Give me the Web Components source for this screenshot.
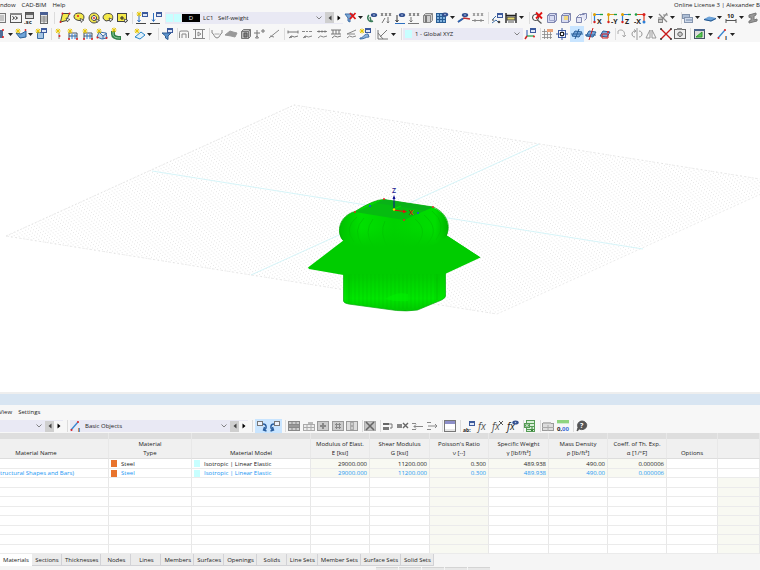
<!DOCTYPE html>
<html lang="en">
<head>
<meta charset="utf-8">
<title>Structural model</title>
<style>
html,body{margin:0;height:100%;background:#fff}
body{font:6px/8px "Open Sans","Noto Sans",sans-serif;color:#222;overflow:hidden}
</style>
</head>
<body>
<model-app></model-app>
<script>
const p=(d,s='#777',f='none',w=1)=>`<path d="${d}" stroke="${s}" fill="${f}" stroke-width="${w}"/>`;
const box=(x,y,w,h,f,s='none')=>`<rect x="${x}" y="${y}" width="${w}" height="${h}" fill="${f}" stroke="${s}"/>`;
const dot=(x,y,c='#e02020',r=1)=>`<circle cx="${x}" cy="${y}" r="${r}" fill="${c}"/>`;
const lbl=(x,y,t,c='#222',s=6)=>`<text x="${x}" y="${y}" fill="${c}" font-size="${s}" font-weight="700">${t}</text>`;
const fxl=c=>`<text x="0" y="9.500" fill="${c}" font-size="10" font-style="italic">fx</text>`;
const win=(x,y)=>box(x+.5,y+.5,5,4,'#dfe8f8','#3c5a9c')+box(x,y,6,2,'#3c5a9c');
const star=(x,y)=>p(`M${x-2.5} ${y}h5M${x} ${y-2.5}v5M${x-2} ${y-2}l4 4M${x+2} ${y-2}l-4 4`,'#e6c400','none',.9);
const eye=(x,y)=>`<ellipse cx="${x}" cy="${y}" rx="3.2" ry="2" fill="#33508f"/>`+dot(x,y,'#b9c8ec',.8);
const cur=(x,y)=>p(`M${x} ${y}l4 1.5-1.7.8-.9 1.7z`,'#333','#fff',.7);
const YL='#f4e94a';
const cube=(f,s)=>p('M1.5 3.5l2-2h7v7l-2 2h-7zM1.5 3.5h7v7M8.5 3.5l2-2',s,f);
const axes=(a,t)=>p('M2.500 10V2.500H10',a,'none',1.2)+p('M8 2.500h3','#18a040','none',1.3)+dot(2.500,2.500,'#e0a000',1.5)+dot(2.500,10,'#d82020',1.2)+lbl(5,11.500,t,'#222',7);
const beam=(c='#777')=>p('M1 4h10M1 2.500v3M11 2.500v3M2 10l2.500-2 3 1L11 8',c)+dot(4,9,c);
const ICON={
page:box(2.5,1.5,7,9,'#eee','#777')+p('M4 4h4M4 6h4M4 8h4','#999'),
console:box(.5,1.5,11,9,'#f4f4f4','#555')+box(0,1,12,2,'#888')+p('M2.500 4.500l2 1.500-2 1.500M5.500 4.500l2 1.500-2 1.500','#222'),
calc:box(1.5,.5,8,6,'#ddd','#555')+box(2,1,7,2,'#666')+lbl(0,11.5,'.sc','#222',6),
sheet:box(2.500,.5,7,11,'#e6e6e6','#666')+box(2,0,8,3,'#4a5f94')+p('M3 5h6M3 7h6M3 9h6M6 4v7','#888'),
selPoly:p('M3.500 1.500h7l-3 7-6 1.500z','#444',YL)+dot(3.5,1.5)+dot(10.5,1.5)+dot(1.5,10)+cur(7,6),
selCirc:p('M1 4.500C1 2 3.500 1 6 1s5 1.500 5 4-2 4-5 3.500S1 7 1 4.500z','#444',YL)+dot(5,4)+cur(7,6.5),
selRing:p('M6 1a5 5 0 1 0 .1 0z','#444',YL)+p('M6 3.500a2.500 2.500 0 1 0 .1 0z','#444','#f6f6f6')+dot(6,6)+cur(7.5,7),
selLasso:p('M1.500 7C0 4 3 1 7 1.500s4 3 3.500 6L4 9z','#444',YL)+cur(7,6),
selBox:box(1.5,1.5,9,8,YL,'#444')+p('M4 6h4M6 4v4','#222')+cur(8,7),
newLc:win(6,0)+p('M3 3v6M1.500 8L3 10l1.500-2','#2c6fc0')+star(3,2)+p('M0 11.500h10','#444'),
loadLc:win(6,0)+p('M3.500 1v8M2 7.500l1.500 2 1.500-2','#2c6fc0')+p('M0 11.500h10','#444'),
filterX:p('M1 2h8L6 6v4l-2-1V6z','#3f6fa8','#7ba6d4')+p('M6 1l5.500 6M11.500 1L6 7','#e01414','none',1.8),
eyeC:p('M3 3c-3 3 0 8 4 6M4 5l1 4','#3b7d5a','none',1.4)+eye(8,3),
nums:p('M1 1l2 3M3 1L1 4M5 1l2 3M7 1L5 4M9 1l2 3M11 1L9 4','#555','none',.8)+p('M2 11l3-5M8 5v6M7 9.500l1 1.500 1-1.500','#777'),
eyeAx:p('M3 3v6M1.500 8L3 10l1.500-2','#333')+p('M1 11.500h10','#2c6fc0')+eye(8,3),
numAx:p('M1 1l2 3M3 1L1 4M5 1l2 3M7 1L5 4M9 1l2 3M11 1L9 4','#555','none',.8)+p('M3 5v5M1.500 8.500L3 10l1.500-1.500M0 11.500h11','#777'),
solid:cube('#cfcfcf','#888')+p('M4 3.500v7','#777','none',2),
mesh:box(.5,1.5,9,9,'#7fb0dc','#285c94')+p('M3.500 2v9M6.500 2v9M1 4.500h9M1 7.500h9','#285c94')+eye(9,2.5),
lineEye:p('M0 10l6-4 6 1','#c03030','none',1.3)+p('M0 10l5-3.500','#2a65b0','none',2)+eye(7,3),
numLine:p('M1 1l2 3M3 1L1 4M5 1l2 3M7 1L5 4M9 1l2 3M11 1L9 4','#777','none',.8)+p('M0 8.500h12M3 7v3M9 7v3','#888'),
dimWin:win(6,1)+p('M1 11l4-3 2 2M1 8l4-4','#3f6fa8')+dot(2,8,'#777')+dot(8,10,'#444',1.3),
scale:p('M1 1v10M11 1v10M1 3.500h10','#222','none',1.4)+box(2,5,8,3,'#e6d86a','#444')+p('M3 10h6','#555'),
findX:p('M4.500 2.500a3 3 0 1 0 .1 0zM6.500 8l4 3.500','#555','#fff',1.2)+p('M5 .5l6 6M11 .5L5 6.500','#e01414','none',1.8),
cube:cube('#d8dcf2','#8087b0')+p('M3.500 1.500v7h7','#a0a6cc'),
cubeY:cube('#d8dcf2','#8087b0')+box(4,4,4,4,'#f1d982'),
cubes:p('M1.500 5.500h5v5h-5zM5.500 3.500l2-2h4v5l-2 2','#8087b0','#e4e6f6')+p('M1.500 5.500l3-3h5','#8087b0'),
axX:axes('#2a7fd8','X'),axY:axes('#d89c20','-Y'),axZ:axes('#2a7fd8','Z'),
axNX:p('M10 10V2.500H1','#e04020','none',1.2)+dot(10,2.5,'#d82020',1.5)+dot(10,10,'#2a7fd8',1.5)+dot(2,2.5,'#18a040',1.3)+lbl(0,11.5,'-X','#222',7),
grayStar:p('M2 2l8 8M10 1L4 9M1 6h5M6 3h5','#888','none',1.2)+box(1.5,7.5,4,3,'#ccc','#888'),
stack:box(.5,2.5,7,4,'#aebfd6','#8494ad')+box(2.5,5.5,8,5,'#d0daea','#8494ad')+p('M4 8h6','#6f86a8'),
plane:p('M0 7.500l5-2.500 7 1.500L7 9z','#6a9fd4','#6aa4dc')+p('M0 7.500L7 9l5-2.500','#24568c'),
dim10:lbl(2,5.5,'10','#222',6)+p('M1 8.500h10M1 7v4M11 7v4','#555'),
ibeam:p('M2 3l7-2v2L7 4v4l3-1v2l-8 2V9l2-.5V5L2 5.500z','#777','#999'),
nodeDrop:box(0,2,8,8,'#506d98')+dot(8,2)+dot(8,9)+box(2,4,3,3,'#c8d8ee'),
newSurf:p('M1 5l4 5 6-1V3L6 6z','#2b5f96','#6fa4d8')+star(3,3)+dot(10.5,2,'#e02020',.9),
newSolid:p('M2.500 4.500h6v6h-6z','#3d6da0','#a3c3e4')+win(6,0)+star(3,3),
newNode:star(5,3)+p('M6 5v6','#888')+dot(6.5,8),
newFrame:p('M2 11V5h8v6M2 8h8','#456','none')+star(3,3)+dot(2,11)+dot(10,11)+p('M5 11V6M8 11V6','#2a7fd8'),
newFrame3:p('M1 9l2-5 7 1 1 5-5 1zM3 4l4 4 4-3M7 8v3','#3f6fa8','#c8d8ea')+star(3,3)+dot(1.5,9.5)+dot(10.5,10),
newPipe:p('M2 3v3c0 3 3 4 8 4','#2f8048','none',4)+p('M2 4v2c0 3 3 4 7 4','#8fd0a0')+star(3,2),
newOpen:p('M1 9l6-5 4 3-5 4z','#2a85c8','#dff0fb')+star(3,3),
funnel:p('M1 5h9L7 8v3.500L4.500 10V8z','#2f5d93','#5f94cc')+win(6,0),
gate:p('M1.500 10V4.500Q1.500 3 3 3h6q1.500 0 1.500 1.500V10M4 10V6h4v4','#888'),
gateR:p('M0 1.500h12M0 10.500h12M2.500 1v10M9.500 1v10M5 4l3 2-3 2z','#888'),
curve:p('M1 2v3c2 0 2 5 5 5s3-5 5-5V2','#888')+p('M3.500 6h5','#aaa'),
surf:p('M0 7l5-4 3 1 4 1-2 4-4-1z','#999','#999'),
solidG:cube('#bbb','#777')+p('M4 5h3v4H4z','#555','#888'),
supp:p('M3 2v6M0 5h6M1.500 10L3 8l1.500 2zM7 3h4M9 1v4','#777'),
slope:p('M1 10L11 2M2 8l4 1','#888'),
beamA:beam(),beamB:p('M1 3.500h3M5 3.500h2M8 3.500h3M2 10l2.500-2 3 1L11 8','#888')+dot(4,9,'#777'),
beamC:p('M1 3.500h10M2 10l2.500-2 3 1L11 8','#888')+dot(3,3.5,'#777')+dot(6,3.5,'#777')+dot(9,3.5,'#777'),
beamD:p('M1 2h10M3 2v4M6 2v4M9 2v4M2 10l2.500-2 3 1L11 8M1 6h10','#777'),
beamE:p('M2 6l9-4M2 6h8M2 10l2.500-2 3 1L11 8','#888'),
newRes:win(6,0)+star(3,3)+p('M1 10c4 0 3-4 8-4l1 3c-4 0-4 2-9 2z','#3f6fa8','#8fb4dc'),
angle:p('M1 2v9h10M3 9l7-7M1 5l5 6','#777'),
csAx:p('M3 2v6','#2050b0')+p('M3 8h7','#18a040','none',1.2)+p('M3 8l-2 3','#d02020','none',1.5)+win(6,0)+dot(10,8.5),
gridPts:p('M0 3.500h10M0 6.500h10M0 9.500h10M2.500 1v10M5.500 1v10M8.500 1v10','#888','none',.8)+box(5,1,6,3,'#e9a27b'),
snap:box(2.5,2.5,7,7,'#f1f3fb','#3c5aa0')+p('M6 0v12M0 6h12','#3c5aa0')+box(4.5,4.5,3,3,'#fff','#222'),
wp:p('M1 8l3-5 7 1-3 5z','#2a5f98','#78a8dc')+p('M0 6h12M4 11l4-10','#2a5f98'),
wpR:p('M1 8l3-5 7 1-3 5z','#2a5f98','#78a8dc')+p('M8 0L4 12','#d02020')+p('M0 7h11','#2a5f98'),
wpB:p('M1 8l3-5 7 1-3 5z','#2a5f98','#78a8dc')+p('M3 6h6v4H3z','#d02020')+dot(9,4),
rot:p('M2 3c4-3 8 1 6 5M6.500 7L8 9l2-2M2 3v3','#aaa'),
mirror:p('M6 0v12M4 3C0 3 0 9 4 9M8 3c4 0 4 6 0 6','#999')+p('M3 1.500L5 3 3 4.500','#999'),
flip:p('M5 2v8H1zM7 2v8h4z','#999'),
cross:p('M1 1l10 10M11 1L1 11','#c81818','none',1.4)+dot(1,1,'#333')+dot(11,1,'#333')+dot(1,11,'#333')+dot(11,11,'#333'),
cam:box(.5,1.5,11,9,'#eee','#666')+p('M6 4a2.200 2.200 0 1 0 .1 0z','#555','#ccc')+box(3,0,5,2,'#888'),
greenBox:box(.5,1.5,10,9,'#ddd','#456')+box(0,1,11,2,'#4a648c')+p('M2 9l6-5v5z','#2d9b2d','#58c858'),
lineI:p('M1 10l7-8','#3a86d0','none',1.3)+dot(1.5,10)+dot(8,2)+lbl(8,11.5,'I','#222',6),
undoW:box(1.5,1.5,5,4,'#eef3fb','#777')+p('M7 4c4 0 4 5 1 6M8.500 7l-1 3 3 1','#2a5fa0','none',1.4),
redoW:box(5.5,1.5,5,4,'#eef3fb','#777')+p('M5 4C1 4 1 9 4 10M3.500 7l1 3-3 1','#2a5fa0','none',1.4),
rows:box(.5,1.500,11,9,'#ccc','#888')+p('M0 4.500h12M0 7.500h12M4 2v9M8 2v9','#888')+box(1,5,10,2,'#999'),
rowAdd:box(.5,4.5,11,6,'#eee','#aaa')+p('M0 7.500h12M4 5v6M8 5v6','#aaa')+p('M5 3h5','#bbb','none',2),
boxPlus:box(.5,1.5,11,9,'#ccc','#999')+p('M6 3v6M3 6h6','#888','none',2),
boxHash:box(.5,1.5,11,9,'#ccc','#999')+p('M4.500 3v6M7.500 3v6M3 4.500h6M3 7.500h6','#888'),
boxDots:box(.5,1.5,11,9,'#ddd','#999')+box(4,2,4,8,'#aaa')+p('M6 3v2M6 7v2','#eee'),
boxX:box(.5,1.5,11,9,'#c4c4c4','#aaa')+p('M2 2l8 8M10 2l-8 8','#666','none',1.6),
rowRet:box(1,3,6,2,'#666')+box(1,7,6,3,'#777')+p('M7 4h3v4H8','#777'),
rowX:box(0,4,5,4,'#888')+p('M6 3l5 5M11 3L6 8','#666','none',1.4),
rowL:p('M1 3.500h4M1 9.500h4M3 6.500h9M5 4.500l-2 2 2 2','#888'),
rowR:p('M1 2.500h4M1 9.500h4M2 6h9M9 4l2 2-2 2','#888'),
pane:box(.5,.5,11,11,'#fff','#777')+box(1,1,10,3,'#8d8fc9')+box(1,9,10,2,'#e6e6e6'),
abcW:win(6,1)+lbl(0,11.500,'ab:','#222',5),
fx:fxl('#555'),
fxX:fxl('#555')+p('M7 1l4 4M11 1L7 5','#555'),
fxE:fxl('#222')+eye(8.5,2.5),
xl:box(2.500,.5,8,11,'#d8efd8','#559b55')+p('M3 3.500h7M3 6.500h7M3 9.500h7','#559b55')+box(0,3,6,5,'#559b55')+p('M1.500 4l3 3M4.500 4l-3 3','#fff','none',.8)+p('M8 7v4M6.500 9.500L8 11l1.500-1.500','#338033'),
tblDel:box(.5,3.500,11,7,'#ddd','#999')+box(1,2,8,2,'#bbb')+p('M0 7.500h12M6 5v6','#aaa'),
dec:box(0,0,12,3,'#8fd47f')+box(0,3,12,1,'#cfead0')+lbl(0,11,'0,','#222',6)+lbl(5,11,'00','#3f6fd8',6),
help:p('M6 1a4.800 4.300 0 1 1-2.500 8L1 11l1-3.500A4.500 4.500 0 0 1 6 1z','#555','#555')+lbl(4,8,'?','#fff',7)
};

const define=(tag,css,body)=>customElements.define(tag,class extends HTMLElement{
  connectedCallback(){
    if(this.shadowRoot)return;
    const t=document.createElement('template');
    t.innerHTML=`<style>*{box-sizing:border-box}button,select{font:inherit;color:inherit;border:0;background:none;padding:0;margin:0}${css}</style>`+(typeof body==='function'?body(this):body);
    this.attachShadow({mode:'open'}).append(t.content.cloneNode(true));
  }
});

define('tool-button',`:host{display:block;flex:none;width:12px;height:14px}
:host([name=drop]){width:8px;margin-left:-2px}
:host([on]){background:#c9e5ff;box-shadow:0 0 0 1px #c9e5ff}
button{display:flex;width:100%;height:100%;align-items:center;justify-content:center}
svg{display:block;flex:none;overflow:visible;font-family:"Open Sans",sans-serif}`,
h=>{const n=h.getAttribute('name');return `<button aria-label="${n}">`+(n==='drop'?'<svg width="5" height="3" viewBox="0 0 5 3"><path d="M0 0h5L2.500 3z" fill="#222"/></svg>':`<svg width="12" height="12" viewBox="0 0 12 12">${ICON[n]}</svg>`)+'</button>'});

define('tool-group',`:host{display:flex;flex:none;align-items:center;justify-content:space-between;width:var(--w)}`,'<slot></slot>');
define('tool-separator',`:host{display:block;flex:none;width:1px;height:12px;margin:0 4px;background:#dcdcdc}`,'');
define('tool-row',`:host{display:flex;align-items:center;height:16px;overflow:hidden;background:#f7f7f7}`,'<slot></slot>');

define('pick-list',`:host{display:flex;flex:none;align-items:center;height:12px;width:var(--w);background:#e9e9f4}
select{appearance:none;flex:1;min-width:0;height:12px;padding:0 3px;font-size:6px;line-height:8px}
svg{flex:none;width:6px;height:4px;margin:0 3px;pointer-events:none}
button{flex:none;width:9px;height:11px;display:flex;align-items:center;justify-content:center}
button svg{width:4px;height:6px;margin:0}.prev{background:#cfcfcf}.next{background:#f7f7f7}`,
h=>`<slot></slot><select aria-label="${h.getAttribute('label')}"><option>${h.getAttribute('value')}</option></select><svg viewBox="0 0 6 4"><path d="M.5.5L3 3 5.500.5" fill="none" stroke="#666" stroke-width=".8"/></svg>`+(h.hasAttribute('steps')?'<button class="prev" aria-label="Previous"><svg viewBox="0 0 4 6"><path d="M3.500.5v5L.5 3z" fill="#444"/></svg></button><button class="next" aria-label="Next"><svg viewBox="0 0 4 6"><path d="M.5.5v5L3.500 3z" fill="#000"/></svg></button>':''));

define('color-chip',`:host{display:flex;flex:none;align-items:center;justify-content:center;width:var(--s,7px);height:8px;margin-left:1px;background:var(--c,#c8ffff);color:#fff}`,'<slot></slot>');

define('menu-bar',`:host{display:flex;height:var(--h,9px);align-items:center;justify-content:space-between;background:#f7f7f7;white-space:nowrap;overflow:hidden}
nav{display:flex;gap:6px;margin-left:var(--shift,0px)}`,
h=>`<nav>${h.getAttribute('items').split(',').map(i=>`<button>${i}</button>`).join('')}</nav><slot></slot>`);

define('model-view',`:host{display:block;flex:1;min-height:0;background:#fff}svg{display:block;width:100%;height:100%}`,()=>{
  const N=100,A=[6,236],V=[288/N,-131/N];let g='',ribs='';
  for(let i=0;i<=N;i++){const x=A[0]+V[0]*i,y=A[1]+V[1]*i;g+=`M${x.toFixed(2)} ${y.toFixed(2)}l491 78`}
  for(let x=347;x<443;x+=4)ribs+=`M${x} 274V${x<400?303+(x-347)/8:(x<420?309:309-(x-420)/2)}`;
  return `<svg viewBox="0 42 760 350" preserveAspectRatio="xMidYMid slice" role="img" aria-label="Model">
  <defs><linearGradient id="b"><stop offset="0" stop-color="#00c000"/><stop offset=".2" stop-color="#00e000"/><stop offset=".5" stop-color="#00d200"/><stop offset=".88" stop-color="#00de00"/><stop offset="1" stop-color="#00b400"/></linearGradient>
  <linearGradient id="v" x2="0" y2="1"><stop offset="0" stop-color="#00cc00"/><stop offset=".25" stop-color="#00cc00"/><stop offset=".75" stop-color="#00e600"/><stop offset="1" stop-color="#00c800"/></linearGradient>
  <linearGradient id="f" x2="0" y2="1"><stop offset="0" stop-color="#00cc00" stop-opacity="0"/><stop offset=".55" stop-color="#00cc00"/><stop offset="1" stop-color="#00cc00"/></linearGradient>
  <linearGradient id="h" x2="0" y2="1"><stop offset="0" stop-color="#00cc00"/><stop offset="1" stop-color="#00cc00" stop-opacity="0"/></linearGradient></defs>
  <path d="${g}" fill="none" stroke="#d2d2d2" stroke-width=".7" stroke-dasharray=".8 4.170"/>
  <path d="M6 236L294 105 785 183 497 314z" fill="none" stroke="#ddd" stroke-width=".6" stroke-dasharray="2 2"/>
  <path d="M152 171l491 78M251 275l288-131" stroke="#cdf3f7" stroke-width=".8"/>
  <path d="M343.500 266V301q0 2 5 3l48 6.500q10 1 21-.5l24-10q4-2 4-4V262z" fill="url(#v)" stroke="#06aa0c" stroke-width=".7"/>
  <path d="${ribs}" stroke="#00b400" stroke-width=".7" opacity=".4"/>
  <path d="M349 274v29M437 274v26" stroke="#00a800" stroke-width=".7" opacity=".7"/>
  <path d="M385 299q12-8 23-5v7q-12 1-23-2z" fill="#00ee00" opacity=".6"/>
  <path d="M344 240L308 267.500 309 269 343.500 275 480.500 257.500 446 235z" fill="#00cc00"/><path d="M446 235l34.500 22.500L445 274V262z" fill="#00cc00"/>
  <path d="M344 262h101v12l-16 8h-85z" fill="url(#h)"/>
  <path d="M384 199.500q-10 0-29 12c-16 5-19 21-12 29q22 12 52 12t51-15c5-10 2-24-13-30z" fill="url(#b)"/>
  <path d="M357 217q-14 11-3 25M364 218q-12 12-2 27M373 219q-10 13 0 27M385 221q-6 12 3 27M415 219q15 12 0 28M424 215q17 14 3 29M432 211q16 13 4 29" fill="none" stroke="#00be00" stroke-width=".6"/>
  <path d="M341 228h107l-2 12-1 22H344l-1-22z" fill="url(#f)"/>
  <path d="M343 240c-7-8-4-24 12-28.500q19-12 29-12l49 7.500c15 6 18 20 13 29" fill="none" stroke="#08a808" stroke-width=".8"/>
  <path d="M384 199.500l49 7.500-29 13-49-8z" fill="#06bc10"/><path d="M384 199.500l49 7.500-8 3.500-49-7.500z" fill="#0cac1c" opacity=".7"/>
  <path d="M394 209v-12" stroke="#101090"/><path d="M392.500 199l1.500-4 1.500 4z" fill="#101090"/>
  <path d="M394 210l10 1.500" stroke="#e01010"/><path d="M403 209.500l4 2.200-4 1.500z" fill="#e01010"/><path d="M394 209l7-3" stroke="#00e000"/>
  ${[[384,199],[433,207],[355,212],[404,220]].map(c=>dot(...c,'#f02020',.9)).join('')}${dot(370,206,'#1850e0')}${dot(418,213,'#1850e0')}${dot(394,209.500,'#ffe000',1.200)}
  <g font-family="Open Sans" font-size="7" font-weight="600"><text x="392" y="193" fill="#202090">Z</text><text x="409" y="215" fill="#e01010">X</text></g></svg>`});

define('material-table',`:host{display:block;flex:none;overflow:hidden;background:#fff}
table{width:100%;table-layout:fixed;border-collapse:separate;border-spacing:0}
th,td{padding:0 3px;font-weight:400;white-space:nowrap;overflow:hidden;border-right:1px solid #e8e8e8}
th{height:20px;background:#f0f0f0;vertical-align:bottom;line-height:9px;border-bottom:1px solid #ddd}
.strip th{height:6px;line-height:0;background:#dedede;border-bottom:0}
td{height:9px;border-bottom:1px solid #ebebeb;line-height:8px}
tbody tr:nth-child(odd) td{height:10px}
td:nth-child(n+4){text-align:right;padding-right:2px}
td.s{background:#f8f9f2}
tr.b td{color:#2196f3}th:first-child{padding-right:39px}td:first-child{padding-left:0}
td:nth-child(2),td:nth-child(3){padding-left:2px}
span{display:flex;align-items:center;gap:4px;height:8px}
i{width:6px;height:7px;background:var(--c)}`,
()=>{
  const W=[109,83,119,59,60,59,60,59,59,51],H=['Material Name','Material<br>Type','Material Model','Modulus of Elast.<br>E [ksi]','Shear Modulus<br>G [ksi]',"Poisson's Ratio<br>ν [--]",'Specific Weight<br>γ [lbf/ft³]','Mass Density<br>ρ [lb/ft³]','Coeff. of Th. Exp.<br>α [1/°F]','Options',''];
  const row=(n,c)=>`<tr class="${c}">`+[n,'<span><i style="--c:#e8732c"></i>Steel</span>','<span><i style="--c:#c8ffff"></i>Isotropic | Linear Elastic</span>','29000.000','11200.000','0.300','489.938','490.00','0.000006','',''].map((t,i)=>`<td class="${i>2&&i<9?'s':''}">${t}</td>`).join('')+'</tr>';
  const empty='<tr>'+H.map((_,i)=>`<td class="${i==5||i==10?'s':''}"></td>`).join('')+'</tr>';
  return `<table><colgroup>${W.map(w=>`<col style="width:${w}px">`).join('')}<col></colgroup><thead><tr class="strip">${'<th></th>'.repeat(11)}</tr><tr>${H.map(h=>`<th>${h}</th>`).join('')}</tr></thead><tbody>${row('','')}${row('tructural Shapes and Bars)','b')}${empty.repeat(8)}</tbody></table>`});

define('tab-strip',`:host{display:flex;flex:none;height:12px;background:#f5f5f5}
button{min-width:30px;padding:0 3px;background:#ebebeb;box-shadow:inset -1px -1px #d2d2d6;white-space:nowrap}
button[aria-selected=true]{background:#fff;box-shadow:none}`,
h=>h.getAttribute('items').split(',').map((t,i)=>`<button role="tab" aria-selected="${!i}">${t}</button>`).join(''));

define('status-bar',`:host{display:flex;flex:none;height:4px;justify-content:center;gap:1px;padding:1px 0 0 106px;background:#f5f5f5}
span{width:22px;background:#e8e8e8;border-top:1px solid #d4d4d4}`,'<span></span>'.repeat(5));

const B=s=>s.split(' ').map(n=>n[0]==='*'?`<tool-button name="${n.slice(1)}" on></tool-button>`:`<tool-button name="${n}"></tool-button>`).join('');
const G=(w,s,m=0)=>`<tool-group style="--w:${w}px${m?`;margin-left:${m}px`:''}">${B(s)}</tool-group>`;
const S='<tool-separator></tool-separator>';
define('model-app',`:host{display:flex;flex-direction:column;height:100vh;overflow:hidden}
.top{flex:none}.title{flex:none;height:13px;background:#d8e5f2;border-top:2px solid #eee}`,
`<div class="top"><menu-bar items="ndow,CAD-BIM,Help"><span>Online License 3 | Alexander B</span></menu-bar>
<tool-row style="height:17px">${G(54,'page console calc sheet',-4)}${S}${G(69,'selPoly selCirc selRing selLasso selBox')}${S}${G(26,'newLc loadLc',-1)}
<pick-list style="--w:178px;margin-left:3px" label="Load case" value="LC1 &nbsp; Self-weight" steps><color-chip></color-chip><color-chip></color-chip><color-chip style="--c:#000;--s:18px">D</color-chip></pick-list>
${G(140,'filterX drop eyeC nums eyeAx numAx solid mesh drop lineEye numLine',1)}${S}${G(34,'dimWin scale drop',-2)}${S}${G(56,'findX cube cubeY cubes',-3)}${S}${G(85,'axX axY axZ axNX drop grayStar drop',-4)}${S}${G(77,'stack drop plane drop dim10 drop ibeam',-4)}</tool-row>
<tool-row style="height:16px">${G(52,'nodeDrop drop newSurf drop newSolid',-5)}${S}${G(101,'newNode newFrame newFrame newFrame3 newPipe drop newOpen drop',-3)}${S}${G(12,'funnel',-2)}${S}${G(27,'gate gateR',-4)}${S}${G(69,'curve surf solidG supp slope',-3)}${S}${G(84,'beamA beamB beamC beamD beamE newRes',-2)}${S}${G(20,'angle drop',-3)}${S}
<pick-list style="--w:120px;margin-left:-3px" label="Coordinate system" value="1 - Global XYZ"><color-chip style="margin-left:2px"></color-chip></pick-list>${G(12,'csAx',1)}${S}${G(69,'gridPts snap *wp wpR wpB',-3)}${S}${G(70,'rot mirror flip cross cam',-4)}${S}${G(43,'greenBox drop lineI drop',-1)}</tool-row></div>
<model-view></model-view><div class="title"></div>
<menu-bar style="--h:14px;--shift:-1px" items="View,Settings"></menu-bar>
<tool-row style="height:14px"><pick-list style="--w:63px" label="Table" value="" steps></pick-list>${S}
<pick-list style="--w:178px;margin-left:-2px" label="Object group" value="Basic Objects" steps><tool-button name="lineI"></tool-button></pick-list>${S}
${G(25,'*undoW *redoW',-1)}${S}${G(70,'rows rowAdd boxPlus boxHash boxDots',-2)}${S}${G(12,'boxX',-3)}${S}${G(56,'rowRet rowX rowL rowR',-3)}${S}${G(12,'pane',-3)}${S}${G(56,'abcW fx fxX fxE',-2)}${S}${G(12,'xl',-4)}${S}${G(27,'tblDel dec',-3)}${S}${G(12,'help',-2)}</tool-row>
<material-table></material-table>
<tab-strip items="Materials,Sections,Thicknesses,Nodes,Lines,Members,Surfaces,Openings,Solids,Line Sets,Member Sets,Surface Sets,Solid Sets"></tab-strip><status-bar></status-bar>`);
</script>
</body>
</html>
